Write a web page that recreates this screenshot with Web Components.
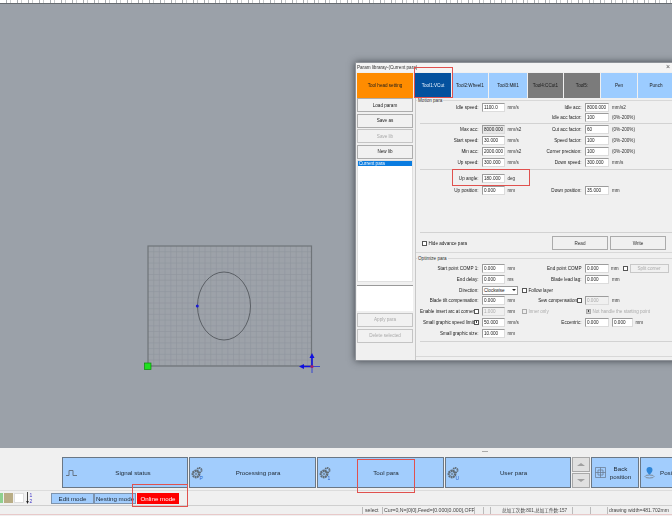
<!DOCTYPE html>
<html><head><meta charset="utf-8">
<style>
html,body{margin:0;padding:0;width:672px;height:516px;overflow:hidden;background:#f0f0f0;font-family:"Liberation Sans",sans-serif}
</style></head><body>
<app-shell>
  <ruler-bar slot="top"></ruler-bar>
  <cad-canvas slot="canvas"></cad-canvas>
  <param-dialog slot="canvas"></param-dialog>
  <func-bar slot="bottom"></func-bar>
  <mode-bar slot="bottom"></mode-bar>
  <status-bar slot="bottom"></status-bar>
</app-shell>
<red-mark style="left:357px;top:459px;width:58px;height:34px"></red-mark>
<red-mark style="left:132px;top:484px;width:56px;height:23px"></red-mark>
<script>
function comp(name, css, html, extra){
  customElements.define(name, class extends HTMLElement{
    constructor(){super();const s=this.attachShadow({mode:'open'});s.innerHTML='<style>'+css+'</style>'+html;}
    connectedCallback(){extra&&extra.call(this);}
  });
}
const FS='4.6px';
const gear=(s)=>`<svg width="14" height="14" viewBox="0 0 14 14" style="flex:none;margin-left:-3px"><g fill="none" stroke="#5f6b76"><circle cx="6" cy="8" r="3.2" stroke-width="2.4" stroke-dasharray="1.7 .5"/><circle cx="6" cy="8" r=".9" stroke-width=".7"/><circle cx="9.4" cy="4.2" r="2.2" stroke-width="1.8" stroke-dasharray="1.3 .5"/></g><text x="9.5" y="13.5" font-size="5" font-family="Liberation Sans" fill="#2c64c8">${s}</text></svg>`;

comp('app-shell',`:host{display:flex;flex-direction:column;width:672px;height:516px}
.c{position:relative;height:444px;overflow:hidden;background:#9ba1a9;flex:none}
.b{flex:1;display:flex;flex-direction:column;background:#f0f0f0;min-height:0}`,
`<slot name="top"></slot><div class="c"><slot name="canvas"></slot></div><div class="b"><slot name="bottom"></slot></div>`);

comp('ruler-bar',`:host{display:block;height:4px;flex:none;background:repeating-linear-gradient(90deg,#fff 0 6px,#a9adb1 6px 7px,#fff 7px 10px,#c9ccce 10px 11px);border-bottom:1px solid #666b70;box-sizing:border-box}`,``);

const gridLines=()=>{let o='';for(let x=153.7;x<311;x+=5.7)o+=`M${x} 246V366`;for(let y=251.7;y<366;y+=5.7)o+=`M148 ${y}H311`;return o;};
comp('cad-canvas',`:host{position:absolute;left:0;top:-4px;width:672px;height:448px;display:block;filter:blur(.25px)}svg{display:block}`,
`<svg width="672" height="448" viewBox="0 0 672 448">
<rect x="148" y="246" width="163.5" height="120" fill="#9da2a9"/>
<path d="${gridLines()}" stroke="#91969d" stroke-width=".6" fill="none"/>
<rect x="148" y="246" width="163.5" height="120" fill="none" stroke="#6f7479" stroke-width="1.2"/>
<ellipse cx="224" cy="306" rx="26.5" ry="34" fill="none" stroke="#54585e" stroke-width=".9"/>
<circle cx="197.3" cy="306" r="1.5" fill="#1a1ad0"/>
<rect x="144.5" y="363" width="6.5" height="6.5" fill="#1fe01f" stroke="#0b8a0b" stroke-width=".7"/>
<path d="M300 366.5H320M312 356V373" stroke="#2030d8" stroke-width=".8"/>
<path d="M312 353l-2.5 5h5zM299 366.5l5-2.5v5z" fill="#1010e0"/>
<path d="M304 366.5H312V358" stroke="#1010e0" stroke-width="1.4" fill="none"/>
<circle cx="312" cy="366.5" r="1.6" fill="#a0206a"/>
</svg>`);

comp('red-mark',`:host{position:absolute;display:block;box-sizing:border-box;border:1px solid #e0514e;z-index:5;pointer-events:none}`,``);

comp('tab-btn',`:host{display:flex;align-items:center;justify-content:center;background:var(--bg,#9cccff);color:var(--fg,#1c1c1c);font-size:${FS};box-sizing:border-box;white-space:nowrap}`,`<slot></slot>`);
comp('side-btn',`:host{display:flex;align-items:center;justify-content:center;height:14px;box-sizing:border-box;border:1px solid #adadad;background:#f1f1f1;color:#222;font-size:${FS};flex:none}:host([off]){color:#aaa;border-color:#c4c4c4}`,`<slot></slot>`);

const place=function(){if(this.hasAttribute('c'))this.style.gridColumn=this.getAttribute('c');};
comp('p-lab',`:host{display:block;text-align:right;font-size:${FS};color:#222;white-space:nowrap;padding-right:3.5px;line-height:9px}`,`<slot></slot>`,place);
comp('p-unit',`:host{display:block;font-size:${FS};color:#333;white-space:nowrap;padding-left:2.5px;line-height:9px}`,`<slot></slot>`,place);
comp('p-in',`:host{display:block;height:9px;box-sizing:border-box;background:#fff;border:1px solid #9c9c9c;border-bottom-color:#dcdcdc;border-right-color:#dcdcdc;font-size:${FS};color:#222;line-height:7px;padding-left:1px;white-space:nowrap;overflow:hidden}:host([off]){background:#f0f0f0;color:#aaa}`,`<slot></slot>`,place);
comp('p-chk',`:host{display:flex;align-items:center;justify-content:flex-end;height:9px;font-size:${FS};color:#222;white-space:nowrap}
i{display:block;box-sizing:border-box;width:5px;height:5px;border:.7px solid #555;background:#fff;flex:none;position:relative}
:host([on]) i::after{content:"";position:absolute;inset:.6px;background:#444}
:host([off]){color:#aaa}:host([off]) i{border-color:#aaa;background:#eee}:host([off][on]) i{background:#ccc}
:host([start]){justify-content:flex-start}span{padding-left:1.5px}`,`<i></i><span><slot></slot></span>`,place);
comp('p-row',`:host{display:grid;grid-template-columns:58px 8px 23px 17px 55px 8px 24px 3px 21px 1fr;align-items:center;height:var(--h,10.6px);flex:none}`,`<slot></slot>`,function(){if(this.hasAttribute('h'))this.style.setProperty('--h',this.getAttribute('h')+'px');});
comp('p-sep',`:host{display:block;height:1px;background:#d2d2d2;margin:0 5px 0 4px;flex:none}`,``,function(){this.style.marginTop=(this.getAttribute('t')||0)+'px';this.style.marginBottom=(this.getAttribute('b')||0)+'px';});
comp('p-group',`:host{display:flex;flex-direction:column;position:relative;box-sizing:border-box;border-top:1px solid #d8d8d8;border-bottom:1px solid #d8d8d8;flex:none}
b{position:absolute;left:1px;top:-4px;font:normal ${FS}/7px "Liberation Sans",sans-serif;color:#333;background:#f0f0f0;padding:0 1px}`,`<b></b><slot></slot>`,function(){this.shadowRoot.querySelector('b').textContent=this.getAttribute('label');this.style.height=this.getAttribute('ht')+'px';this.style.paddingTop=this.getAttribute('pt')+'px';});

comp('param-dialog',`:host{position:absolute;left:355px;top:58px;width:330px;height:299px;display:flex;flex-direction:column;background:#f0f0f0;box-shadow:0 0 7px rgba(30,34,40,.7);box-sizing:border-box;border:1px solid #8f9399;font-family:"Liberation Sans",sans-serif;color:#333;filter:blur(.25px)}
.t{height:9px;flex:none;display:flex;align-items:center;padding:0 0 0 1px;font-size:${FS};background:#f4f4f4;color:#333;position:relative}
.x{font-size:7px;color:#555;position:absolute;left:310px;top:0}
.tabs{display:flex;height:25px;flex:none;padding-left:1px;gap:1px;margin-top:1px}
.tabs tab-btn:nth-child(1){width:56px;margin-right:1px}
.tabs tab-btn{width:36px}
.main{flex:1;display:flex;min-height:0}
.l{width:56px;margin-left:1px;display:flex;flex-direction:column;flex:none}
.list{height:122px;background:#fff;border:1px solid #e0e0e0;box-sizing:border-box;margin-top:1px;flex:none;font-size:${FS}}
.list div{background:#0a7ce0;color:#fff;height:5.5px;line-height:5.5px;padding-left:1px}
.blank{height:26px;background:#fff;border-top:1px solid #999;box-sizing:border-box;margin:3px 0 2px;flex:none}
.r{flex:1;margin-left:2px;display:flex;flex-direction:column;border-left:1px solid #c8c8c8;padding-top:2px;position:relative}
.act{display:flex;align-items:center;height:16px;flex:none}
.hide{width:136px;padding-left:6px;box-sizing:border-box}
.big{width:56px;height:14px;border:1px solid #ababab;display:flex;align-items:center;justify-content:center;font-size:${FS};margin-right:2px;box-sizing:border-box;background:#f0f0f0}
.sel{position:relative;height:9px;grid-column:3/5;width:36px;background:#fff;border:1px solid #9c9c9c;box-sizing:border-box;font-size:${FS};line-height:7px;padding-left:1px;color:#222}
.sel::after{content:"";position:absolute;right:1px;top:2.5px;border:2px solid transparent;border-top:2.5px solid #222;border-bottom:0}
.endc{grid-column:8/11;display:flex;align-items:center}
.endc p-unit{width:14px;box-sizing:border-box;padding-left:2px;flex:none}
.split{width:39px;height:9px;border:1px solid #c8c8c8;box-sizing:border-box;font-size:${FS};color:#aaa;display:flex;align-items:center;justify-content:center;white-space:nowrap;flex:none}
`,
`<div class="t"><span>Param libraray-(Current para)</span><span class="x">×</span></div>
<div class="tabs">
<tab-btn style="--bg:#ff8c00">Tool head setting</tab-btn>
<tab-btn style="--bg:#04519e;--fg:#e8f2ff">Tool1:VCut</tab-btn>
<tab-btn>Tool2:Wheel1</tab-btn>
<tab-btn style="width:38px">Tool3:Mill1</tab-btn>
<tab-btn style="--bg:#7b7b7b;width:35px">Tool4:CCut1</tab-btn>
<tab-btn style="--bg:#7b7b7b">Tool5:</tab-btn>
<tab-btn>Pen</tab-btn>
<tab-btn>Punch</tab-btn>
</div>
<div class="main">
<div class="l">
 <side-btn>Load param</side-btn>
 <side-btn style="margin-top:1.5px">Save as</side-btn>
 <side-btn off style="margin-top:1.5px">Save lib</side-btn>
 <side-btn style="margin-top:1.5px">New lib</side-btn>
 <div class="list"><div>Current para</div></div>
 <div class="blank"></div>
 <side-btn off>Apply para</side-btn>
 <side-btn off style="margin-top:2px">Delete selected</side-btn>
</div>
<div class="r">
 <p-group label="Motion para" ht="153" pt="1">
  <p-row h="10"><p-lab c="1/3">Idle speed:</p-lab><p-in c="3">1100.0</p-in><p-unit c="4">mm/s</p-unit><p-lab c="5/7">Idle acc:</p-lab><p-in c="7">8000.000</p-in><p-unit c="8/11" style="padding-left:3px">mm/s2</p-unit></p-row>
  <p-row h="10"><p-lab c="5/7">Idle acc factor:</p-lab><p-in c="7">100</p-in><p-unit c="8/11" style="padding-left:3px">(0%-200%)</p-unit></p-row>
  <p-sep t="0.5"></p-sep>
  <p-row h="11"><p-lab c="1/3">Max acc:</p-lab><p-in c="3" style="background:#e8e8e8">8000.000</p-in><p-unit c="4">mm/s2</p-unit><p-lab c="5/7">Cut acc factor:</p-lab><p-in c="7">60</p-in><p-unit c="8/11" style="padding-left:3px">(0%-200%)</p-unit></p-row>
  <p-row h="11"><p-lab c="1/3">Start speed:</p-lab><p-in c="3">30.000</p-in><p-unit c="4">mm/s</p-unit><p-lab c="5/7">Speed factor:</p-lab><p-in c="7">100</p-in><p-unit c="8/11" style="padding-left:3px">(0%-200%)</p-unit></p-row>
  <p-row h="11"><p-lab c="1/3">Min acc:</p-lab><p-in c="3">2000.000</p-in><p-unit c="4">mm/s2</p-unit><p-lab c="5/7">Corner precision:</p-lab><p-in c="7">100</p-in><p-unit c="8/11" style="padding-left:3px">(0%-200%)</p-unit></p-row>
  <p-row h="11"><p-lab c="1/3">Up speed:</p-lab><p-in c="3">300.000</p-in><p-unit c="4">mm/s</p-unit><p-lab c="5/7">Down speed:</p-lab><p-in c="7">300.000</p-in><p-unit c="8/11" style="padding-left:3px">mm/s</p-unit></p-row>
  <p-sep t="1.5" b="2.5"></p-sep>
  <p-row h="12"><p-lab c="1/3">Up angle:</p-lab><p-in c="3">180.000</p-in><p-unit c="4">deg</p-unit></p-row>
  <p-row h="12"><p-lab c="1/3">Up position:</p-lab><p-in c="3">0.000</p-in><p-unit c="4">mm</p-unit><p-lab c="5/7">Down position:</p-lab><p-in c="7">35.000</p-in><p-unit c="8/11" style="padding-left:3px">mm</p-unit></p-row>
  <div style="flex:1"></div>
  <p-sep></p-sep>
  <div class="act" style="margin-bottom:1px;margin-top:2px"><div class="hide"><p-chk start>Hide advance para</p-chk></div><div class="big">Read</div><div class="big">Write</div></div>
 </p-group>
 <div style="height:5px;flex:none"></div>
 <p-group label="Optimize para" ht="99" pt="4.7">
  <p-row><p-lab c="1/3">Start point COMP 1:</p-lab><p-in c="3">0.000</p-in><p-unit c="4">mm</p-unit><p-lab c="5/7">End point COMP</p-lab><p-in c="7">0.000</p-in><div class="endc"><p-unit>mm</p-unit><p-chk start></p-chk><div class="split">Split corner</div></div></p-row>
  <p-row><p-lab c="1/3">End delay:</p-lab><p-in c="3">0.000</p-in><p-unit c="4">ms</p-unit><p-lab c="5/7">Blade lead lag:</p-lab><p-in c="7">0.000</p-in><p-unit c="8/11" style="padding-left:3px">mm</p-unit></p-row>
  <p-row><p-lab c="1/3">Direction:</p-lab><div class="sel">Clockwise</div><p-chk c="5" start>Follow layer</p-chk></p-row>
  <p-row><p-lab c="1/3">Blade tilt compensation:</p-lab><p-in c="3">0.000</p-in><p-unit c="4">mm</p-unit><p-lab c="5" style="padding-right:0">Sew compensation</p-lab><p-chk c="6" start></p-chk><p-in c="7" off>0.000</p-in><p-unit c="8/11" style="padding-left:3px">mm</p-unit></p-row>
  <p-row><p-lab c="1" style="padding-right:0">Enable insert arc at corner</p-lab><p-chk c="2" start></p-chk><p-in c="3" off>1.000</p-in><p-unit c="4">mm</p-unit><p-chk c="5" start off>Inner only</p-chk><p-chk c="7/11" start off on style="margin-left:1px">Not handle the starting point</p-chk></p-row>
  <p-row h="11"><p-lab c="1" style="padding-right:0">Small graphic speed limit</p-lab><p-chk c="2" start on></p-chk><p-in c="3">50.000</p-in><p-unit c="4">mm/s</p-unit><p-lab c="5/7">Eccentric:</p-lab><p-in c="7">0.000</p-in><p-in c="9">0.000</p-in><p-unit c="10">mm</p-unit></p-row>
  <p-row h="11"><p-lab c="1/3">Small graphic size:</p-lab><p-in c="3">10.000</p-in><p-unit c="4">mm</p-unit></p-row>
  <p-sep t="2.3"></p-sep>
 </p-group>
</div>
</div>
<red-mark style="left:58px;top:4px;width:39px;height:31px"></red-mark>
<red-mark style="left:96px;top:106px;width:78px;height:17px"></red-mark>`);

comp('big-btn',`:host{display:flex;align-items:center;box-sizing:border-box;height:31px;background:#a2cdfd;border:1px solid #6a7785;font-size:6.2px;color:#1e2832;padding-left:3px;flex:none;white-space:nowrap}
span{flex:1;text-align:center;padding-right:3px;line-height:8px}`,`<slot name="i"></slot><span><slot></slot></span>`);
comp('spin-col',`:host{display:flex;flex-direction:column;gap:1px;width:18px;height:31px;flex:none}
div{flex:1;background:#e0e0e0;border:1px solid #a8a8a8;display:flex;align-items:center;justify-content:center;box-sizing:border-box}
i{width:0;height:0;border:4px solid transparent}
.u{border-bottom:3.5px solid #a0a0a0;border-top:0}.d{border-top:3.5px solid #a0a0a0;border-bottom:0}`,`<div><i class="u"></i></div><div><i class="d"></i></div>`);
comp('func-bar',`:host{display:block;height:43px;flex:none;position:relative;border-bottom:1px solid #dcdcdc;box-sizing:border-box;filter:blur(.2px)}
.g{height:9px;display:flex;justify-content:center;padding-top:3px;box-sizing:border-box}.g i{width:6px;height:1px;background:#aaa}
.row{display:flex;padding-left:62px;gap:1px}`,
`<div class="g"><i style="margin-left:298px"></i></div><div class="row">
<big-btn style="width:126px"><svg slot="i" width="12" height="8" viewBox="0 0 12 8" style="flex:none"><path d="M0 6.5H3V1.5H7V6.5H11" fill="none" stroke="#5d6c7b" stroke-width=".9"/></svg><b style="font-weight:normal;position:relative;left:2px">Signal status</b></big-btn>
<big-btn style="width:127px"><span slot="i" style="display:flex">${gear('P')}</span>Processing para</big-btn>
<big-btn style="width:127px"><span slot="i" style="display:flex">${gear('1')}</span>Tool para</big-btn>
<big-btn style="width:126px"><span slot="i" style="display:flex">${gear('U')}</span>User para</big-btn>
<spin-col></spin-col>
<big-btn style="width:48px;line-height:8px"><svg slot="i" width="11" height="11" viewBox="0 0 11 11" style="flex:none"><path d="M.5.5h10v10h-10zM.5 5.5h10M5.5.5v10M3 3h5v5H3z" fill="none" stroke="#66758a" stroke-width=".7"/></svg>Back<br>position</big-btn>
<big-btn style="width:40px;padding-right:0"><svg slot="i" width="11" height="13" viewBox="0 0 11 13" style="flex:none"><path d="M5.5 1a3 3 0 0 1 3 3c0 2-3 5-3 5s-3-3-3-5a3 3 0 0 1 3-3z" fill="#2f86d8"/><ellipse cx="5.5" cy="10.5" rx="4.5" ry="1.5" fill="none" stroke="#7c8a99"/></svg><b style="font-weight:normal;padding-left:5px">Position</b></big-btn>
</div>`);

comp('mode-bar',`:host{display:flex;align-items:center;height:15px;flex:none;border-bottom:1px solid #cfcfcf;box-sizing:border-box;font-size:6.2px;color:#1e2832;filter:blur(.2px)}
.s{height:10px;flex:none}.m{height:11px;display:flex;align-items:center;justify-content:center;box-sizing:border-box;white-space:nowrap;flex:none}
.a{background:#a2cdfd;border:1px solid #7d93ad}`,
`<div class="s" style="width:3px;background:#8fd08f"></div><div class="s" style="width:9px;margin-left:1px;background:#b9ad86"></div><div class="s" style="width:10px;margin-left:1px;background:#fff;border:1px solid #ddd;box-sizing:border-box"></div>
<svg width="8" height="12" viewBox="0 0 8 12" style="margin-left:2px;flex:none"><path d="M1.5 0V11" stroke="#444"/><path d="M.2 9L1.5 12 2.8 9z" fill="#222"/><text x="3.6" y="5" font-size="5" fill="#4338c8" font-family="Liberation Sans">1</text><text x="3.6" y="11" font-size="5" fill="#4338c8" font-family="Liberation Sans">2</text></svg>
<div class="m a" style="width:43px;margin-left:17px">Edit mode</div><div class="m a" style="width:42px">Nesting mode</div><div class="m" style="width:42px;margin-left:1px;background:#f00;color:#fff">Online mode</div>`);

comp('status-bar',`:host{display:flex;height:9px;flex:none;padding-top:1px;align-items:flex-start;font-size:5.2px;color:#444;background:#f0f0f0;border-bottom:1px solid #e8c9c9;box-sizing:border-box;overflow:hidden;font-family:"Liberation Sans","Noto Sans CJK SC",sans-serif;filter:blur(.2px)}
div{height:7px;line-height:7px;border-right:1px solid #bbb;box-sizing:border-box;white-space:nowrap;padding-left:2px;flex:none;overflow:hidden}`,
`<div style="width:363px;padding:0"></div><div style="width:20px">select</div><div style="width:92px;padding-left:1px">Cur=0,N=[0|0],Feed=[0.000|0.000],OFF</div><div style="width:9px"></div><div style="width:7px"></div><div style="width:82px;padding-left:11px;font-size:4.6px">总加工次数:801,总加工件数:157</div><div style="width:18px"></div><div style="width:17px"></div><div style="width:64px;padding-left:1px;border-right:0;font-size:5px">drawing width=481.702mm</div>`);
</script>
</body></html>
